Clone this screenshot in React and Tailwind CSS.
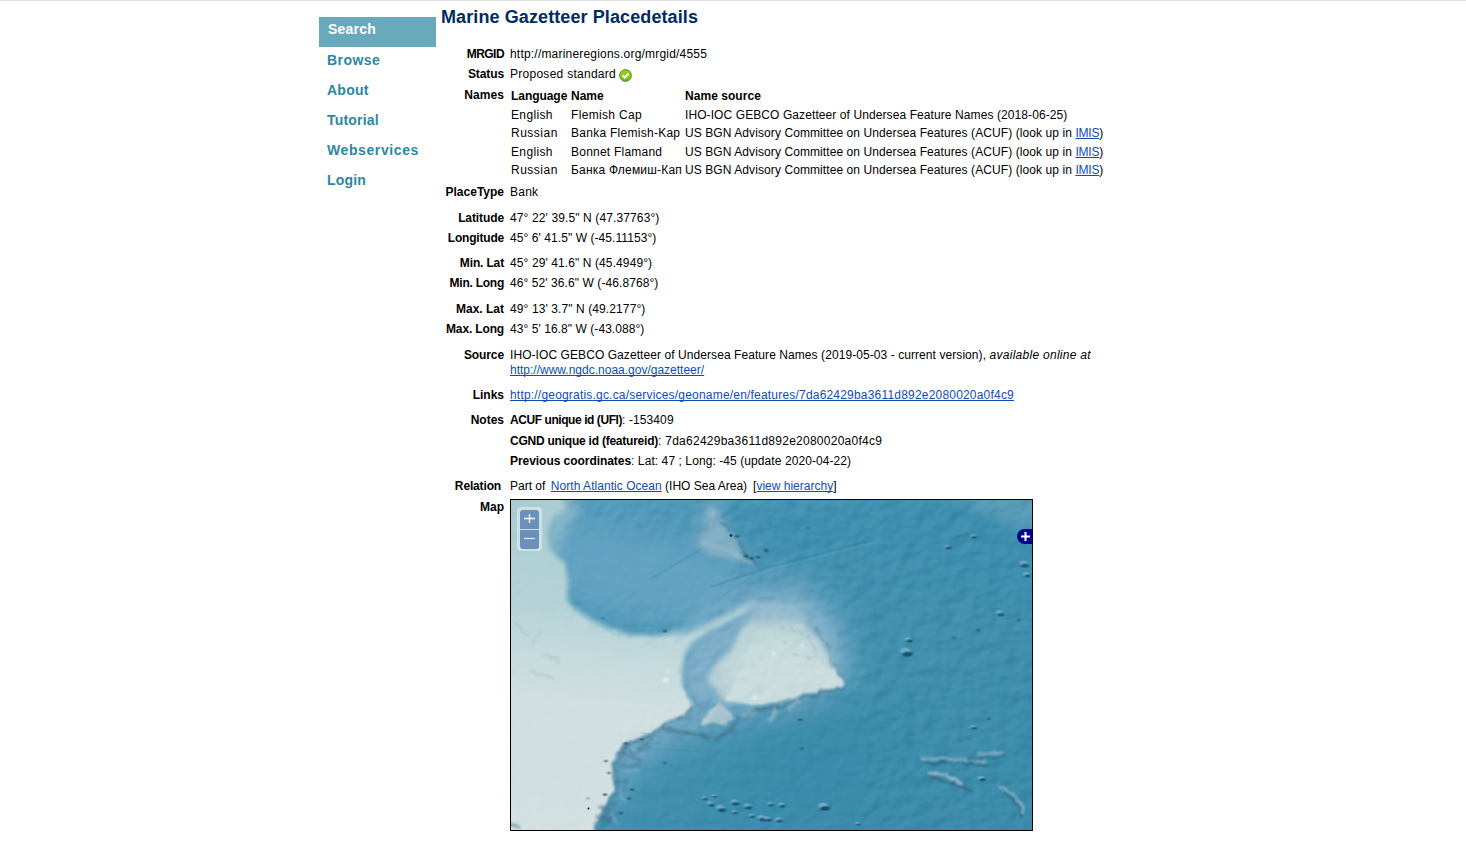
const NAV = [
  ["Browse", "tracking-[0.45px]"],
  ["About", "tracking-[0.25px]"],
  ["Tutorial", "tracking-[0.2px]"],
  ["Webservices", "tracking-[0.6px]"],
  ["Login", "tracking-[0.2px]"],
];

function A({ children, className = "" }) {
  return (
    <a href="#" className={"text-[#0f4bb4] underline underline-offset-1 decoration-1 [text-decoration-skip-ink:none] " + className}>
      {children}
    </a>
  );
}

function Row({ label, h, t = "", end = "", children }) {
  return (
    <div className={"flex " + h}>
      <div className={"w-16 shrink-0 text-right font-bold " + end}>
        <span className={t}>{label}</span>
      </div>
      <div className="pl-1.5 whitespace-pre">{children}</div>
    </div>
  );
}

const NAMES = [
  ["English", "tracking-[0.35px]", "Flemish Cap", "tracking-[0.33px]", false, "h-[18px]"],
  ["Russian", "tracking-[0.5px]", "Banka Flemish-Kap", "tracking-[0.27px]", true, "h-[19px]"],
  ["English", "tracking-[0.35px]", "Bonnet Flamand", "tracking-[0.23px]", true, "h-[18px]"],
  ["Russian", "tracking-[0.5px]", "Банка Флемиш-Кап", "tracking-[0.2px]", true, "h-[18px]"],
];

function NamesTable() {
  return (
    <div className="pl-px pt-px">
      <div className="flex h-[19px] font-bold">
        <span className="w-[60px] tracking-[-0.05px]">Language</span>
        <span className="w-[114px]">Name</span>
        <span className="tracking-[0.05px]">Name source</span>
      </div>
      {NAMES.map(([lang, lt, name, nt, acuf, h], i) => (
        <div key={i} className={"flex " + h}>
          <span className={"w-[60px] " + lt}>{lang}</span>
          <span className={"w-[114px] " + nt}>{name}</span>
          {acuf ? (
            <span className="tracking-[0.085px]">
              US BGN Advisory Committee on Undersea Features (ACUF) (look up in{" "}
              <A className="tracking-[-0.2px]">IMIS</A>)
            </span>
          ) : (
            <span className="tracking-[0.09px]">
              IHO-IOC GEBCO Gazetteer of Undersea Feature Names (2018-06-25)
            </span>
          )}
        </div>
      ))}
    </div>
  );
}

function CheckIcon() {
  return (
    <svg className="ml-[3px] mt-0.5" width="13" height="13" viewBox="0 0 13 13">
      <defs>
        <linearGradient id="ok" x1="0" y1="0" x2="0" y2="1">
          <stop offset="0" stopColor="#8fcb1c" />
          <stop offset=".6" stopColor="#8fd01c" />
          <stop offset="1" stopColor="#62a812" />
        </linearGradient>
      </defs>
      <circle cx="6.5" cy="6.5" r="5.9" fill="url(#ok)" stroke="#5c9328" strokeWidth="1" />
      <path d="M3.6 6.3l2.2 2.4 3.7-4.3" fill="none" stroke="#fff" strokeWidth="1.9" />
    </svg>
  );
}

/* Bright/dark pairs standing for small seamounts: x, y, size */
const MOUNTS = [
  [394, 153, 5], [397, 141, 3], [488, 114, 3.5], [462, 36, 2.5], [436, 47, 2.5], [462, 230, 2.5],
  [193, 302, 2.5], [199, 308, 3], [209, 312, 4], [223, 306, 3.5], [236, 310, 3.5], [223, 316, 2.5],
  [240, 320, 2.5], [250, 322, 3.5], [259, 308, 2.5], [270, 309, 3], [256, 323, 3], [267, 324, 3],
  [312, 310, 4.5], [346, 328, 2], [470, 282, 3], [512, 64, 4], [515, 75, 3], [203, 300, 2],
];
/* Dark pits: x, y, strength */
const SPECKS = [
  [226, 37, 0.7], [235, 57, 0.7], [241, 59, 0.8], [247, 58, 0.8], [255, 51, 0.7], [154, 133, 0.7],
  [92, 120, 0.3], [297, 28, 0.4], [467, 132, 0.6], [443, 140, 0.4], [508, 122, 0.4], [77, 303, 0.3],
  [121, 294, 0.7], [118, 303, 0.6], [94, 299, 0.8], [95, 265, 0.6], [98, 277, 0.6], [154, 267, 0.5],
  [131, 243, 0.6], [289, 223, 0.6], [291, 252, 0.4], [478, 222, 0.5], [110, 318, 0.6], [115, 247, 0.7],
];

function SeaMap() {
  return (
    <svg className="block" width="521" height="330" viewBox="0 0 521 330">
      <defs>
        <linearGradient id="deep" x1="0" y1="0" x2="1" y2="1">
          <stop offset="0" stopColor="#5b9fbf" />
          <stop offset=".45" stopColor="#4291b1" />
          <stop offset="1" stopColor="#3a8ba9" />
        </linearGradient>
        <linearGradient id="shelf" gradientUnits="userSpaceOnUse" x1="30" y1="0" x2="0" y2="330">
          <stop offset="0" stopColor="#a9ccd2" />
          <stop offset=".33" stopColor="#b6d3d7" />
          <stop offset=".48" stopColor="#c6dbdd" />
          <stop offset=".6" stopColor="#d0dfe0" />
          <stop offset="1" stopColor="#d2e0e1" />
        </linearGradient>
        <radialGradient id="cap" gradientUnits="userSpaceOnUse" cx="265" cy="180" r="75">
          <stop offset="0" stopColor="#d2e2e1" />
          <stop offset=".55" stopColor="#c3d9da" />
          <stop offset="1" stopColor="#a9c7d2" />
        </radialGradient>
        <filter id="b1" x="-10%" y="-10%" width="120%" height="120%"><feGaussianBlur stdDeviation=".8" /></filter>
        <filter id="b3" x="-30%" y="-30%" width="160%" height="160%"><feGaussianBlur stdDeviation="2.5" /></filter>
        <filter id="b6" x="-30%" y="-30%" width="160%" height="160%"><feGaussianBlur stdDeviation="6" /></filter>
        <filter id="b10" x="-50%" y="-50%" width="200%" height="200%"><feGaussianBlur stdDeviation="14" /></filter>
        <filter id="rough" x="-10%" y="-10%" width="120%" height="120%">
          <feTurbulence type="fractalNoise" baseFrequency=".09" numOctaves="3" seed="4" />
          <feDisplacementMap in="SourceGraphic" scale="8" xChannelSelector="R" yChannelSelector="G" />
          <feGaussianBlur stdDeviation="1.3" />
        </filter>
        <filter id="ridge" x="-20%" y="-40%" width="140%" height="180%">
          <feTurbulence type="fractalNoise" baseFrequency=".12" numOctaves="3" seed="9" />
          <feDisplacementMap in="SourceGraphic" scale="6" xChannelSelector="R" yChannelSelector="G" />
          <feGaussianBlur stdDeviation=".9" />
        </filter>
        <filter id="relief" x="0" y="0" width="100%" height="100%" colorInterpolationFilters="sRGB">
          <feTurbulence type="fractalNoise" baseFrequency=".06 .075" numOctaves="2" seed="31" result="n" />
          <feColorMatrix in="n" values="0 0 0 0 0  0 0 0 0 0  0 0 0 0 0  1 0 0 0 0" />
          <feDiffuseLighting surfaceScale="3" diffuseConstant=".72" lightingColor="#fff">
            <feDistantLight azimuth="225" elevation="44" />
          </feDiffuseLighting>
        </filter>
        <mask id="sea">
          <rect width="521" height="330" fill="#fff" />
          <path d="M0 0H35L50 70L55 120L130 150L165 150L165 200L100 240L80 330H0Z" fill="#444" filter="url(#b6)" />
          <path d="M45 30L240 40L190 110L80 110Z" fill="#555" filter="url(#b6)" />
          <path d="M110 255L350 205L350 330H100Z" fill="#888" filter="url(#b6)" />
        </mask>
      </defs>
      <rect width="521" height="330" fill="url(#deep)" />
      <g transform="scale(1 .985)">
        <g filter="url(#b10)">
          <path d="M30 20L180 45L240 65L195 122L150 130L60 105L30 50Z" fill="#64a2c3" />
          <path d="M180 130L225 88L290 80L330 115L345 180L290 210L230 220L170 245L125 270L98 330L100 240Z" fill="#7bacc7" opacity=".85" />
          <path d="M170 0H521V90L420 60L340 50L280 70L230 30Z" fill="#3d8eaf" opacity=".7" />
          <path d="M240 250L290 225L400 220L380 330H210Z" fill="#378baa" opacity=".7" />
        </g>
        <g filter="url(#b6)">
          <path d="M430 -10H530V30L500 26L470 12Z" fill="#6ba4bd" opacity=".6" />
          <path d="M190 -5H215L212 25L240 60L190 55L178 48Z" fill="#73a8c2" opacity=".6" />
          <path d="M0 -10H60L70 15L55 30L45 60L0 60Z" fill="#93bdca" opacity=".7" />
          <path d="M243 100L290 98L322 128L334 178L300 190L230 190L222 124Z" fill="#86b3ca" opacity=".75" />
        </g>
        <g filter="url(#b3)">
          <path d="M197 5L206 10L214 26L222 36L227 44L232 57L245 65L230 63L200 56L186 46L195 28Z" fill="#88b2c4" opacity=".8" />
        </g>
        <g filter="url(#rough)">
          <path d="M209 24L220 29M228 42L235 58L247 66" fill="none" stroke="#34627c" strokeWidth="2" opacity=".55" />
          <path d="M204 9L200 30M190 42L220 52L240 64" fill="none" stroke="#a9c6d0" strokeWidth="3" opacity=".35" />
        </g>
        <g filter="url(#b3)">
          <path d="M-8 -8H46L56 8L43 17L36 32L38 50L55 65L57 82L56 102L72 116L95 129L122 137L150 138L177 136L205 124L232 110L244 104L232 116L198 134L182 144L174 156L170 178L172 196L182 208L168 218L139 234L111 246L100 264L102 290L92 312L80 340H-8Z" fill="url(#shelf)" />
          <path d="M140 139L180 132L215 117L246 102" fill="none" stroke="#a4c9d9" strokeWidth="4" opacity=".6" />
        </g>
        <g filter="url(#rough)">
          <path d="M60 160L155 165L168 178L174 202L180 210L168 220L139 235L111 248L100 266L102 292L92 313L80 342H-10V170Z" fill="url(#shelf)" />
          <path d="M182 210L170 220L141 237L114 251L104 268L106 292L96 313L84 335" fill="none" stroke="#527f96" strokeWidth="4" opacity=".5" />
          <path d="M57 106L74 120L97 134L122 141" fill="none" stroke="#4f8eb0" strokeWidth="2" opacity=".2" />
        </g>
        <g filter="url(#b3)">
          <path d="M226 120L200 136L184 148L178 168L178 188L186 200L200 204L214 212L226 208L206 196L197 180L206 163L222 148L236 118Z" fill="#7eaec8" />
          <path d="M240 124L268 119L294 126L309 142L319 160L322 174L329 187L300 192L281 198L262 204L228 206L212 202L196 182L206 165L219 154L231 130Z" fill="url(#cap)" />
          <path d="M246 104L280 106L300 122L268 128L236 124Z" fill="#9fc1d0" opacity=".7" />
        </g>
        <g filter="url(#rough)">
          <path d="M230 170L300 158L322 172L333 188L304 194L283 200L262 206L236 208L216 202Z" fill="#cadcdd" />
          <path d="M208 207L197 217L191 230L206 225L214 230L221 221L214 209Z" fill="#a6c3cf" />
          <path d="M303 131L316 148L320 164L332 182" fill="none" stroke="#628ea3" strokeWidth="2" opacity=".55" />
          <path d="M150 232L172 236L206 242L221 234L226 222L246 213L270 210L286 204L310 195L336 191" fill="none" stroke="#456f86" strokeWidth="3.5" opacity=".6" />
          <path d="M228 219L246 215M258 224L264 212M277 213L288 204" fill="none" stroke="#8fb5c7" strokeWidth="4" opacity=".7" />
          <path d="M182 203L191 212L187 222L174 222" fill="none" stroke="#5f8fa9" strokeWidth="1.6" opacity=".6" />
          <path d="M210 205L193 230M216 212L222 222" fill="none" stroke="#c5d8dc" strokeWidth="2" opacity=".6" />
        </g>
        <g filter="url(#ridge)">
          <path d="M410 262L427 263L450 263L475 265M466 258L494 256" fill="none" stroke="#86b3c8" strokeWidth="3.5" opacity=".85" />
          <path d="M409 264L424 269L436 265L460 268L478 270M455 263L482 262L494 258" fill="none" stroke="#27637d" strokeWidth="2" opacity=".85" />
          <path d="M417 276L436 280L452 288" fill="none" stroke="#9ebdcd" strokeWidth="3.5" opacity=".9" />
          <path d="M420 281L440 287L463 295M492 296L508 310L512 322" fill="none" stroke="#315f78" strokeWidth="2" opacity=".85" />
          <path d="M488 290L502 299L510 309L513 319" fill="none" stroke="#93b7c8" strokeWidth="2.5" opacity=".85" />
          <path d="M112 247L122 258L139 250M107 270L130 268M118 282L110 298M107 304L93 323M142 240L127 254M110 316L96 328M112 257L132 266M104 287L116 284" fill="none" stroke="#416b80" strokeWidth="1.8" opacity=".5" />
          <path d="M116 252L135 259M110 276L128 274M108 294L114 306M100 316L106 326" fill="none" stroke="#a5c6d4" strokeWidth="2" opacity=".4" />
          <path d="M3 125L18 138M22 146L30 134M30 158L48 160L45 166M20 174L44 182" fill="none" stroke="#769da4" strokeWidth="1.4" opacity=".35" />
          <path d="M88 310L96 314M84 322L98 326M-2 328L10 333" fill="none" stroke="#477285" strokeWidth="4" opacity=".5" />
        </g>
        <g filter="url(#b1)" fill="none">
          <path d="M200 88L262 67L360 41M140 80L190 50M440 38L466 34" stroke="#2d7898" strokeWidth="1" opacity=".55" />
          <path d="M200 90L262 70L360 44" stroke="#64a9c5" strokeWidth="1.6" opacity=".4" />
          <path d="M130 236L150 240M118 245L195 252M125 252L210 256M200 105L240 78" stroke="#4b87a6" strokeWidth="1" opacity=".5" />
          {MOUNTS.map(([x, y, s], i) => (
            <g key={i}>
              <ellipse cx={x} cy={y} rx={s} ry={s * 0.65} fill="#7fb4cc" opacity=".75" />
              <ellipse cx={x + s * 0.5} cy={y + s * 0.7} rx={s} ry={s * 0.5} fill="#174c66" opacity=".9" />
            </g>
          ))}
          {SPECKS.map(([x, y, o], i) => (
            <circle key={i} cx={x} cy={y} r="1.6" fill="#12384a" opacity={o} />
          ))}
          <circle cx="155" cy="183" r="3" fill="#dde9e8" />
          <circle cx="157" cy="174" r="2" fill="#d8e6e5" />
          <circle cx="263" cy="156" r="2.5" fill="#dde9e7" opacity=".8" />
          <circle cx="291" cy="148" r="2.2" fill="#d7e6e5" opacity=".7" />
          <circle cx="244" cy="200" r="2.5" fill="#dde9e6" />
          <path d="M270 128l4 5M280 129l4 6M288 132l4 6M296 137l4 7M301 146l4 6M283 156l4 3M296 158l3 4M272 143l4 3" stroke="#8db3c0" strokeWidth="1.5" opacity=".5" />
        </g>
      </g>
      <g className="mix-blend-soft-light" opacity=".34" mask="url(#sea)">
        <rect width="521" height="330" filter="url(#relief)" />
      </g>
      <circle cx="77.5" cy="308.5" r="1" fill="#0c1b20" />
      <circle cx="220" cy="35.5" r="1.3" fill="#0c1b20" />
    </svg>
  );
}

export default function App() {
  return (
    <div className="flex h-[842px] border-t border-[#e0e0e0] bg-white pl-[319px] font-['Liberation_Sans',Arial,sans-serif] text-[12px] leading-[15px] text-black">
      <nav className="w-[117px] shrink-0 pt-4 text-[14px] font-bold text-[#2c87a2]">
        <div className="h-[30px] bg-[#69a9bc] pl-[9px] leading-[25px] tracking-[0.2px] text-white">Search</div>
        {NAV.map(([n, t]) => (
          <div key={n} className={"h-[30px] pl-2 leading-[26px] " + t}>{n}</div>
        ))}
      </nav>
      <main className="pl-1">
        <h1 className="h-[46px] pl-px pt-1 text-[18px] font-bold leading-6 tracking-[0.1px] text-[#002b5e]">
          Marine Gazetteer Placedetails
        </h1>
        <Row label="MRGID" t="tracking-[-0.55px]" h="h-5">
          <span className="tracking-[0.2px]">http://marineregions.org/mrgid/4555</span>
        </Row>
        <Row label="Status" t="tracking-[-0.1px]" h="h-[21px]">
          <div className="flex"><span className="tracking-[0.27px]">Proposed standard</span><CheckIcon /></div>
        </Row>
        <Row label="Names" t="tracking-[0.1px]" h="h-[97px]"><NamesTable /></Row>
        <Row label="PlaceType" h="h-[26px]"><span className="tracking-[0.25px]">Bank</span></Row>
        <Row label="Latitude" t="tracking-[-0.1px]" h="h-5">
          <span className="tracking-[0.12px]">{"47° 22' 39.5\" N (47.37763°)"}</span>
        </Row>
        <Row label="Longitude" t="tracking-[-0.2px]" h="h-[25px]">
          <span className="tracking-[0.07px]">{"45° 6' 41.5\" W (-45.11153°)"}</span>
        </Row>
        <Row label="Min. Lat" t="tracking-[-0.15px]" h="h-5">
          <span className="tracking-[0.1px]">{"45° 29' 41.6\" N (45.4949°)"}</span>
        </Row>
        <Row label="Min. Long" t="tracking-[-0.25px]" h="h-[26px]">
          <span className="tracking-[0.08px]">{"46° 52' 36.6\" W (-46.8768°)"}</span>
        </Row>
        <Row label="Max. Lat" h="h-5">
          <span className="tracking-[0.1px]">{"49° 13' 3.7\" N (49.2177°)"}</span>
        </Row>
        <Row label="Max. Long" t="tracking-[-0.15px]" h="h-[26px]">
          <span className="tracking-[0.06px]">{"43° 5' 16.8\" W (-43.088°)"}</span>
        </Row>
        <Row label="Source" t="tracking-[-0.1px]" h="h-10">
          <span className="tracking-[0.073px]">
            {"IHO-IOC GEBCO Gazetteer of Undersea Feature Names (2019-05-03 - current version), "}
          </span>
          <i className="tracking-[0.28px]">available online at</i>
          <br />
          <A>http://www.ngdc.noaa.gov/gazetteer/</A>
        </Row>
        <Row label="Links" h="h-[25px]">
          <A className="tracking-[0.196px]">
            http://geogratis.gc.ca/services/geoname/en/features/7da62429ba3611d892e2080020a0f4c9
          </A>
        </Row>
        <Row label="Notes" h="h-[66px]">
          <div className="h-[21px]">
            <b className="tracking-[-0.43px]">ACUF unique id (UFI)</b>
            <span className="tracking-[0.1px]">: -153409</span>
          </div>
          <div className="h-5">
            <b className="tracking-[-0.23px]">CGND unique id (featureid)</b>
            <span className="tracking-[0.26px]">: 7da62429ba3611d892e2080020a0f4c9</span>
          </div>
          <div>
            <b className="tracking-[-0.05px]">Previous coordinates</b>
            <span className="tracking-[0.08px]">: Lat: 47 ; Long: -45 (update 2020-04-22)</span>
          </div>
        </Row>
        <Row label="Relation" t="tracking-[-0.15px]" end="pr-[3px]" h="h-5">
          <span>Part of</span>
          <A className="ml-[5.5px] tracking-[0.04px]">North Atlantic Ocean</A>
          <span>{" (IHO Sea Area)"}</span>
          <span className="ml-[6px]">[</span><A>view hierarchy</A>]
        </Row>
        <Row label="Map" end="pt-px" h="h-[332px]">
          <div className="relative border border-black">
            <SeaMap />
            <div className="absolute left-1.5 top-[7px] flex flex-col gap-px rounded bg-white/40 p-[3px] pb-[2px]">
              <button className="flex size-[19px] items-center justify-center rounded-t-[3px] bg-[#6b90bb]">
                <svg width="11" height="11" viewBox="0 0 11 11"><path d="M0 4.5H11M5.5 0V9" stroke="#fff" strokeWidth="1.3" /></svg>
              </button>
              <button className="flex size-[19px] items-center justify-center rounded-b-[3px] bg-[#6b90bb]">
                <svg width="11" height="11" viewBox="0 0 11 11"><path d="M0 4.5H11" stroke="#fff" strokeWidth="1.1" /></svg>
              </button>
            </div>
            <button className="absolute right-0 top-[29px] flex h-[15px] w-[15px] items-center justify-end rounded-l-full bg-[#00008b] pr-[2px]">
              <svg width="9" height="9" viewBox="0 0 9 9"><path d="M0 4.5H9M4.5 0V9" stroke="#fff" strokeWidth="2" /></svg>
            </button>
          </div>
        </Row>
      </main>
    </div>
  );
}
